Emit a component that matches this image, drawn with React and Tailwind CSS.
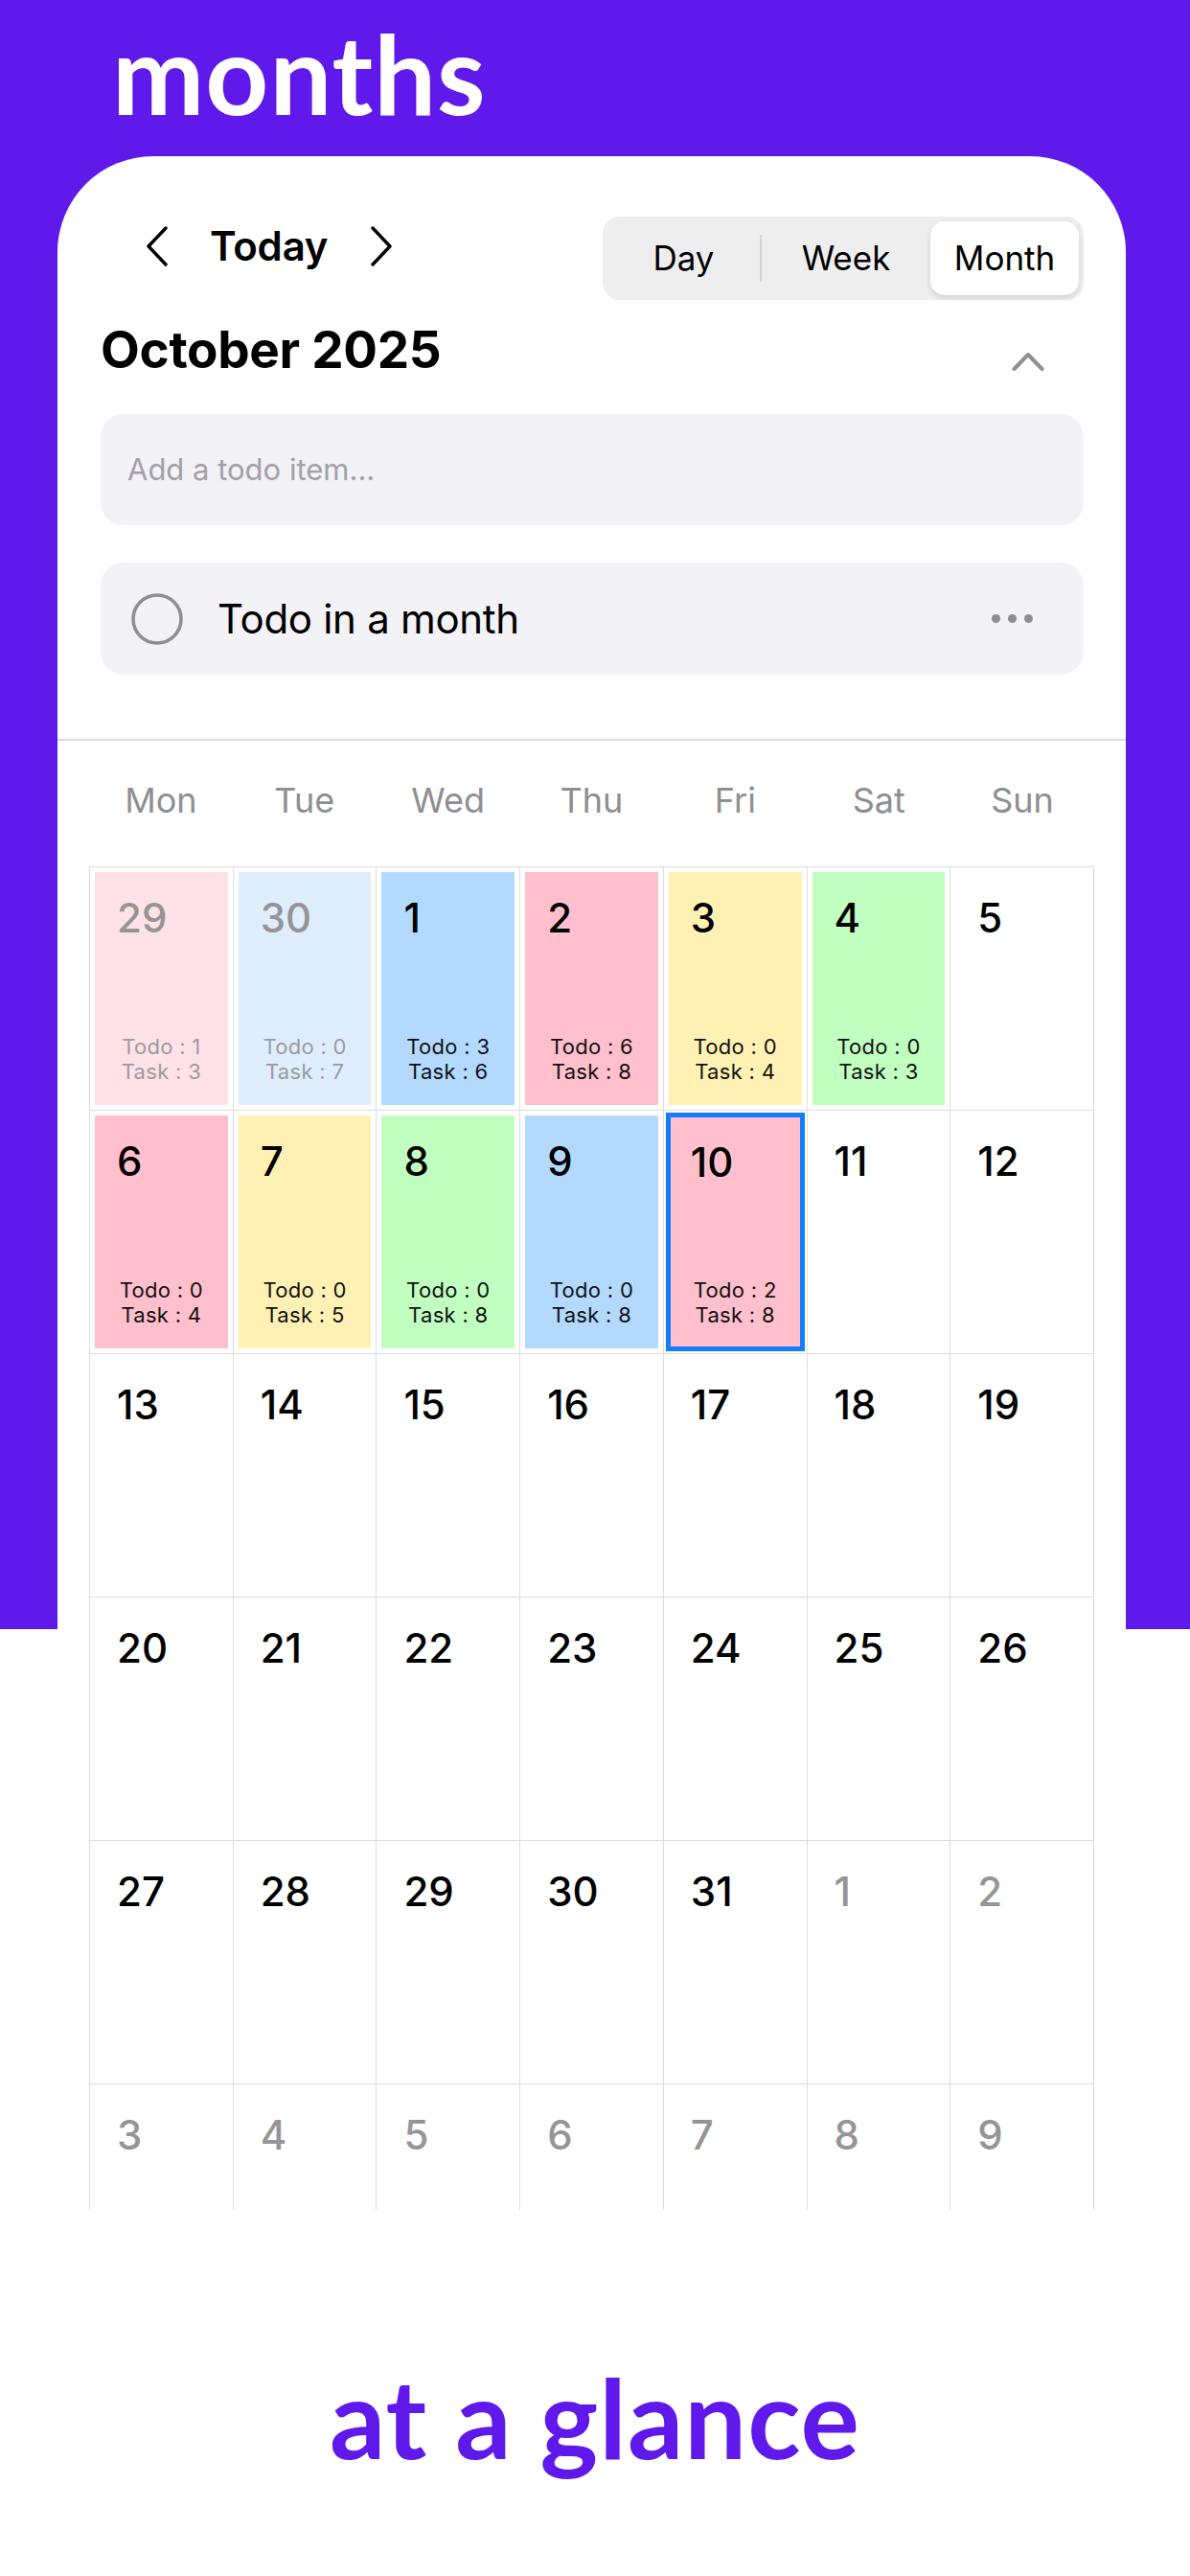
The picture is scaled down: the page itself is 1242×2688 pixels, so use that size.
import React from "react";

const W = [
  [
    { d: 29, out: true, bg: "bg-[#ffe2e8]", todo: 1, task: 3 },
    { d: 30, out: true, bg: "bg-[#dfeeff]", todo: 0, task: 7 },
    { d: 1, bg: "bg-[#b3d9ff]", todo: 3, task: 6 },
    { d: 2, bg: "bg-[#ffbfcc]", todo: 6, task: 8 },
    { d: 3, bg: "bg-[#fff1b3]", todo: 0, task: 4 },
    { d: 4, bg: "bg-[#c0ffc0]", todo: 0, task: 3 },
    { d: 5 },
  ],
  [
    { d: 6, bg: "bg-[#ffbfcc]", todo: 0, task: 4 },
    { d: 7, bg: "bg-[#fff1b3]", todo: 0, task: 5 },
    { d: 8, bg: "bg-[#c0ffc0]", todo: 0, task: 8 },
    { d: 9, bg: "bg-[#b3d9ff]", todo: 0, task: 8 },
    { d: 10, bg: "bg-[#ffbfcc]", todo: 2, task: 8, sel: true },
    { d: 11 },
    { d: 12 },
  ],
  [13, 14, 15, 16, 17, 18, 19].map((d) => ({ d })),
  [20, 21, 22, 23, 24, 25, 26].map((d) => ({ d })),
  [
    { d: 27 },
    { d: 28 },
    { d: 29 },
    { d: 30 },
    { d: 31 },
    { d: 1, out: true },
    { d: 2, out: true },
  ],
  [3, 4, 5, 6, 7, 8, 9].map((d) => ({ d, out: true })),
];

function Cell({ c }) {
  const hasData = c.todo !== undefined;
  if (c.sel) {
    return (
      <div className="h-[254px] border-r border-b border-[#dddddd] p-[2px] flex">
        <div className={`flex-1 flex flex-col justify-between border-[5px] border-[#167dfa] pt-[26px] pb-[20px] px-[21px] ${c.bg}`}>
          <div className="text-[42px] leading-[42px] font-medium text-black">{c.d}</div>
          <div className="self-center text-center text-[22px] leading-[26px] tracking-[0.3px] text-[#111]">
            <div>Todo : {c.todo}</div>
            <div>Task : {c.task}</div>
          </div>
        </div>
      </div>
    );
  }
  return (
    <div className="h-[254px] border-r border-b border-[#dddddd] p-[5px] flex">
      <div className={`flex-1 flex flex-col justify-between pt-[27px] pb-[22px] px-[23px] ${c.bg || ""}`}>
        <div className={`text-[42px] leading-[42px] font-medium ${c.out ? "text-[#959595]" : "text-black"}`}>{c.d}</div>
        {hasData && (
          <div className={`self-center text-center text-[22px] leading-[26px] tracking-[0.3px] ${c.out ? "text-[#9b9b9b]" : "text-[#111]"}`}>
            <div>Todo : {c.todo}</div>
            <div>Task : {c.task}</div>
          </div>
        )}
      </div>
    </div>
  );
}

export default function App() {
  return (
    <div className="w-[1242px] h-[2688px] overflow-hidden bg-[linear-gradient(to_bottom,#6019eb_1700px,#ffffff_1700px)] font-['Inter',sans-serif]">
      <div className="pl-[117px] pt-[18px] h-[163px] font-['Lato',sans-serif] font-bold text-white text-[115px] leading-[115px] tracking-[1px]">
        months
      </div>

      <div className="ml-[60px] w-[1115px] h-[2143px] overflow-hidden bg-white rounded-t-[100px]">
        <div className="pl-[45px] pr-[44px]">
          {/* header row */}
          <div className="flex items-start justify-between pt-[63px]">
            <div className="flex items-center h-[40px] mt-[11px] ml-[47px]">
              <svg width="24" height="42" viewBox="0 0 24 42" fill="none" stroke="#000" strokeWidth="3.4" strokeLinecap="round" strokeLinejoin="round">
                <path d="M21 2 L3 21 L21 40" />
              </svg>
              <span className="ml-[43px] text-[42px] leading-[40px] font-semibold text-black tracking-[-0.2px]">Today</span>
              <svg className="ml-[44px]" width="24" height="42" viewBox="0 0 24 42" fill="none" stroke="#000" strokeWidth="3.4" strokeLinecap="round" strokeLinejoin="round">
                <path d="M3 2 L21 21 L3 40" />
              </svg>
            </div>
            <div className="flex items-center h-[87px] p-[5px] bg-[#eeeeef] rounded-[18px]">
              <div className="w-[159px] h-[77px] flex items-center justify-center text-[35px] text-black">Day</div>
              <div className="w-[2px] h-[49px] bg-[#d4d4d6]" />
              <div className="w-[176px] h-[77px] flex items-center justify-center text-[35px] text-black">Week</div>
              <div className="w-[155px] h-[77px] flex items-center justify-center text-[35px] text-black bg-white rounded-[15px] shadow-[0_3px_6px_rgba(0,0,0,0.12)]">Month</div>
            </div>
          </div>

          {/* month title */}
          <div className="flex items-start justify-between mt-[26px]">
            <div className="text-[53px] leading-[52px] font-bold text-black tracking-[-0.3px]">October 2025</div>
            <svg className="mt-[27px] mr-[41px]" width="34" height="22" viewBox="0 0 34 22" fill="none" stroke="#8e8e93" strokeWidth="4" strokeLinecap="round" strokeLinejoin="round">
              <path d="M2.5 19 L17 4 L31.5 19" />
            </svg>
          </div>

          {/* input */}
          <div className="mt-[41px] h-[116px] rounded-[24px] bg-[#f2f2f7] flex items-center pl-[28px]">
            <span className="text-[31px] text-[#a1a1a6]">Add a todo item...</span>
          </div>

          {/* todo */}
          <div className="mt-[39px] h-[117px] rounded-[24px] bg-[#f2f2f7] flex items-center pl-[32px] pr-[53px]">
            <svg width="54" height="54" viewBox="0 0 54 54" fill="none">
              <circle cx="27" cy="27" r="25" stroke="#8e8e93" strokeWidth="3.6" />
            </svg>
            <span className="ml-[36px] flex-1 text-[42px] text-black tracking-[-0.3px]">Todo in a month</span>
            <div className="flex items-center gap-[8px]">
              <span className="w-[9px] h-[9px] rounded-full bg-[#8e8e93]" />
              <span className="w-[9px] h-[9px] rounded-full bg-[#8e8e93]" />
              <span className="w-[9px] h-[9px] rounded-full bg-[#8e8e93]" />
            </div>
          </div>
        </div>

        <div className="mt-[67px] h-[2px] bg-[#dcdcdf]" />

        {/* weekday header */}
        <div className="pl-[33px] pr-[33px]">
          <div className="grid grid-cols-7 h-[131px] items-center pb-[8px]">
            {["Mon", "Tue", "Wed", "Thu", "Fri", "Sat", "Sun"].map((d) => (
              <div key={d} className="text-center text-[36px] text-[#8e8e93]">{d}</div>
            ))}
          </div>

          <div className="border-l border-t border-[#dddddd]">
            {W.map((row, i) => (
              <div key={i} className="grid grid-cols-7">
                {row.map((c, j) => (
                  <Cell key={j} c={c} />
                ))}
              </div>
            ))}
          </div>
        </div>
      </div>

      <div className="pt-[158px] text-center font-['Lato',sans-serif] font-bold text-[#6019eb] text-[115px] leading-[115px] tracking-[1px]">
        at a glance
      </div>
    </div>
  );
}
